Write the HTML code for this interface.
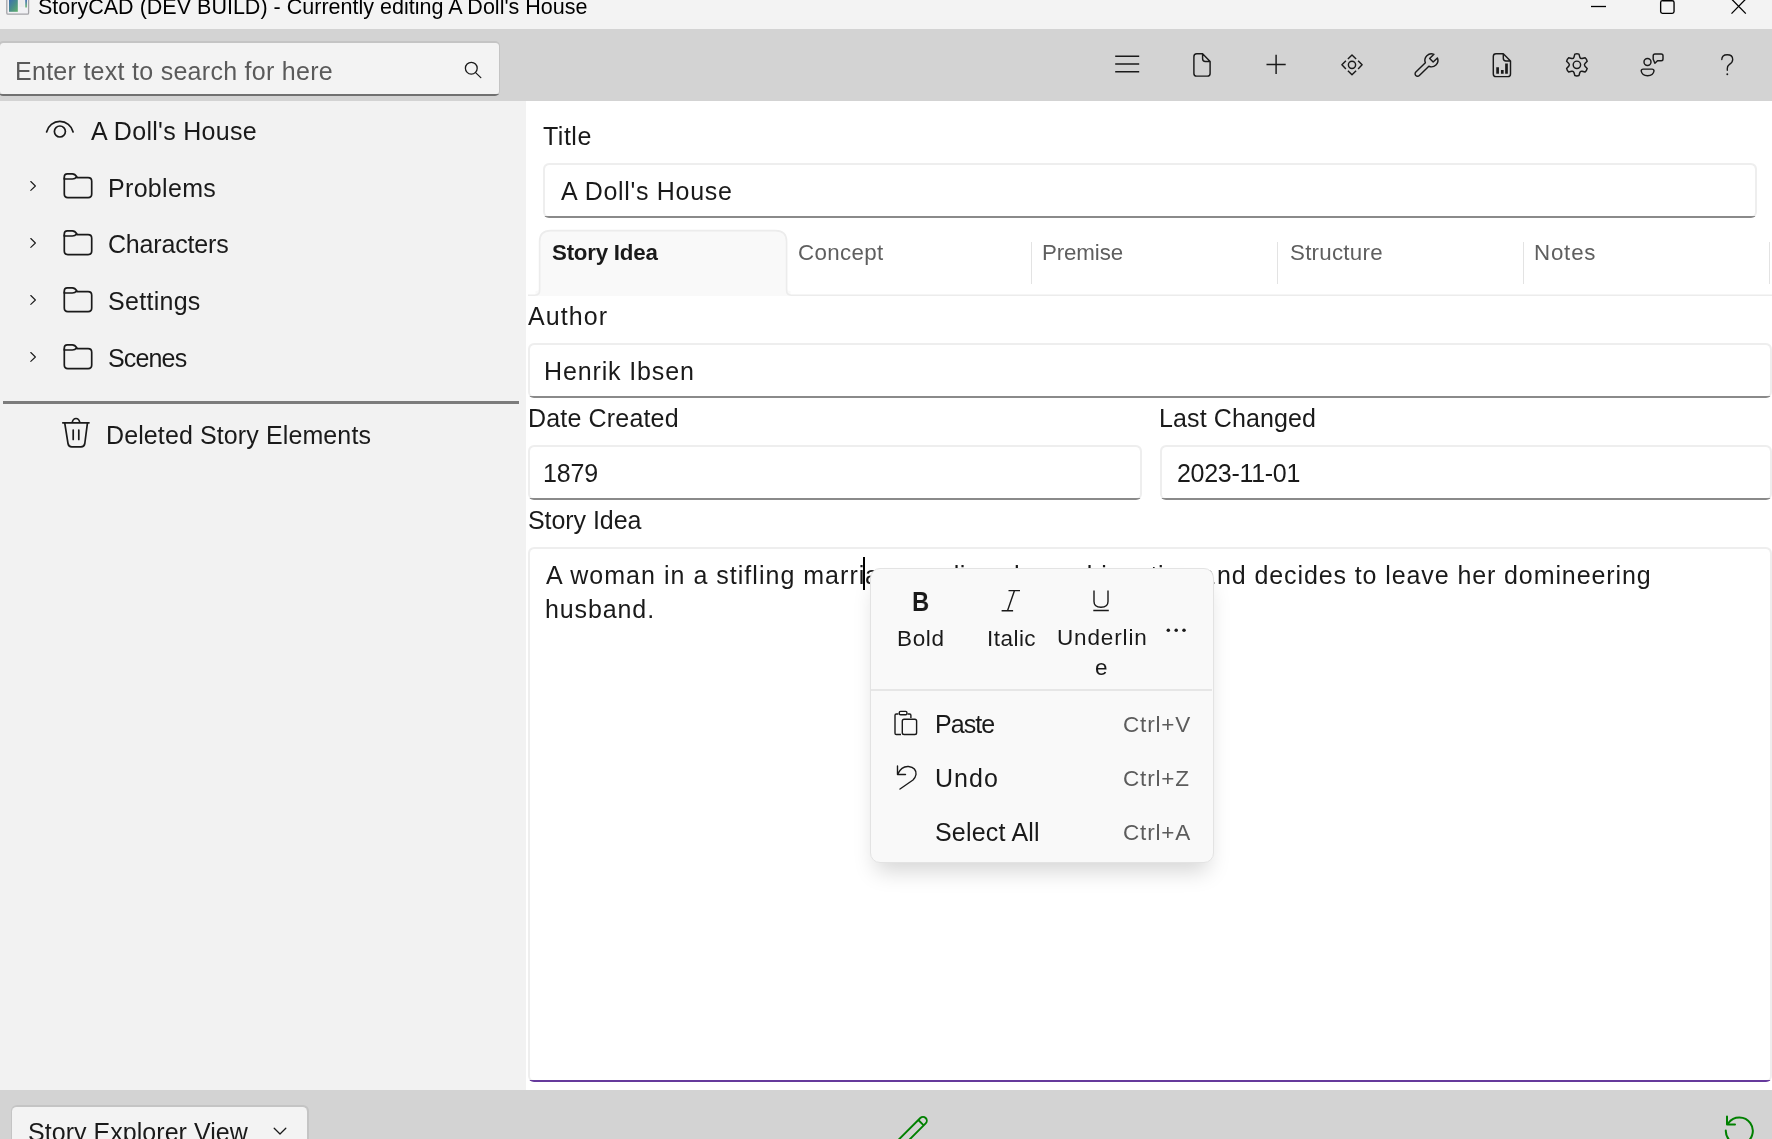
<!DOCTYPE html>
<html><head><meta charset="utf-8"><style>
html,body{margin:0;padding:0;width:1772px;height:1139px;overflow:hidden;background:#f3f3f3}
body{position:relative;font-family:"Liberation Sans",sans-serif}
.t{position:absolute;will-change:transform;white-space:pre;line-height:1;font-family:"Liberation Sans",sans-serif}
</style></head><body>
<div style="position:absolute;left:0px;top:0px;width:1772px;height:29px;box-sizing:border-box;background:#f3f3f3"></div>
<div style="position:absolute;left:0px;top:29px;width:1772px;height:72px;box-sizing:border-box;background:#d3d3d3"></div>
<div style="position:absolute;left:0px;top:101px;width:526px;height:989px;box-sizing:border-box;background:#f2f2f2"></div>
<div style="position:absolute;left:526px;top:101px;width:1246px;height:989px;box-sizing:border-box;background:#ffffff"></div>
<div style="position:absolute;left:0px;top:1090px;width:1772px;height:49px;box-sizing:border-box;background:#d3d3d3"></div>
<svg style="position:absolute;left:0;top:0" width="36" height="20" viewBox="0 0 36 20"><defs><linearGradient id="g1" x1="0" y1="0" x2="1" y2="1"><stop offset="0" stop-color="#3d6fb0"/><stop offset="0.5" stop-color="#4a8e8a"/><stop offset="1" stop-color="#62b06a"/></linearGradient><linearGradient id="g2" x1="0" y1="0" x2="0" y2="1"><stop offset="0" stop-color="#4a74b8"/><stop offset="1" stop-color="#78c07a"/></linearGradient></defs><rect x="6.8" y="-3" width="21.8" height="17.2" rx="1.2" fill="#f1f1f4" stroke="#a4a4a8" stroke-width="1.3"/><rect x="9" y="0" width="8.8" height="11.8" fill="url(#g1)"/><rect x="19.2" y="0" width="5" height="7" fill="#ececec"/><rect x="25.2" y="0" width="1.8" height="7.5" fill="url(#g2)"/></svg>
<div class="t" style="left:37.5px;top:-3.2px;font-size:21.50px;letter-spacing:0.01px;font-weight:400;color:#000;">StoryCAD (DEV BUILD) - Currently editing A Doll's House</div>
<svg style="position:absolute;left:1585px;top:0" width="170" height="20" viewBox="1585 0 170 20"><line x1="1591" y1="6.5" x2="1606" y2="6.5" stroke="#000" stroke-width="1.3"/><rect x="1660.65" y="0.7" width="13.4" height="12.6" rx="1.8" fill="none" stroke="#000" stroke-width="1.35"/><path d="M1731.5 -1 L1745.8 13.6 M1745.8 -1 L1731.5 13.6" stroke="#000" stroke-width="1.3"/></svg>
<div style="position:absolute;left:-2px;top:41.4px;width:502px;height:54.6px;border-radius:5px;background:linear-gradient(to bottom,#c4c4c4 calc(100% - 2px),#707070 calc(100% - 2px));overflow:hidden"><div style="position:absolute;left:1.5px;top:1.5px;right:1.5px;bottom:2px;background:#f3f3f3;border-radius:3.5px 3.5px 3px 3px"></div></div>
<div class="t" style="left:15.3px;top:58.7px;font-size:25.00px;letter-spacing:0.28px;font-weight:400;color:#5a5a5a;">Enter text to search for here</div>
<svg style="position:absolute;left:460px;top:56px" width="26" height="26" viewBox="460 56 26 26"><circle cx="471.3" cy="68.2" r="5.9" fill="none" stroke="#1a1a1a" stroke-width="1.3"/><line x1="475.6" y1="72.6" x2="480.8" y2="77.6" stroke="#1a1a1a" stroke-width="1.3" stroke-linecap="round"/></svg>
<svg style="position:absolute;left:0;top:0" width="1772" height="101" viewBox="0 0 1772 101"><path d="M1115.2 56.3H1139.2M1115.2 64H1139.2M1115.2 71.7H1139.2" fill="none" stroke="#1a1a1a" stroke-width="1.45" stroke-linecap="butt" stroke-linejoin="round"/><path d="M1196.8 53.8H1202.6L1210.1 61.5V73.4Q1210.1 76.1 1207.4 76.1H1196.6Q1193.9 76.1 1193.9 73.4V56.7Q1193.9 53.8 1196.8 53.8Z M1202.6 53.8V58.8Q1202.6 61.5 1205.3 61.5H1210.1" fill="none" stroke="#1a1a1a" stroke-width="1.45" stroke-linecap="round" stroke-linejoin="round"/><path d="M1276.1 54.8V74M1266.5 64.4H1285.7" fill="none" stroke="#1a1a1a" stroke-width="1.45" stroke-linecap="butt" stroke-linejoin="round"/><path d="M1347.9 58.9L1352 54.9L1356.1 58.9M1347.9 70.8L1352 74.8L1356.1 70.8M1345.9 60.75L1341.9 64.85L1345.9 68.95M1358.1 60.75L1362.1 64.85L1358.1 68.95" fill="none" stroke="#1a1a1a" stroke-width="1.45" stroke-linecap="butt" stroke-linejoin="round"/><circle cx="1352" cy="64.85" r="3.6" fill="none" stroke="#1a1a1a" stroke-width="1.45" stroke-linecap="round" stroke-linejoin="round"/><path d="M1433.94 54.32A6.5 6.5 0 0 0 1425.36 62.7L1415.85 72.01A2.5 2.5 0 0 0 1419.35 75.59L1428.86 66.28A6.5 6.5 0 0 0 1437.44 57.9L1433.15 62.09L1429.65 58.51Z" fill="none" stroke="#1a1a1a" stroke-width="1.45" stroke-linecap="round" stroke-linejoin="round"/><path d="M1496 53.8H1503.3L1510.5 61V73.9Q1510.5 76.6 1507.8 76.6H1496Q1493.3 76.6 1493.3 73.9V56.5Q1493.3 53.8 1496 53.8Z M1503.3 53.8V58.3Q1503.3 61 1506 61H1510.5" fill="none" stroke="#1a1a1a" stroke-width="1.45" stroke-linecap="round" stroke-linejoin="round"/><path d="M1497.6 67.3V73.8M1502.3 70V73.8M1506.5 63.5V73.8" fill="none" stroke="#1a1a1a" stroke-width="2.7" stroke-linecap="butt"/><path d="M1574.82 54.15 Q1576.90 53.45 1578.98 54.15 L1579.84 57.19 Q1580.35 58.87 1582.06 58.48 L1585.13 57.70 Q1586.77 59.15 1587.21 61.30 L1585.00 63.57 Q1583.80 64.85 1585.00 66.13 L1587.21 68.40 Q1586.77 70.55 1585.13 72.00 L1582.06 71.22 Q1580.35 70.83 1579.84 72.51 L1578.98 75.55 Q1576.90 76.25 1574.82 75.55 L1573.96 72.51 Q1573.45 70.83 1571.74 71.22 L1568.67 72.00 Q1567.03 70.55 1566.59 68.40 L1568.80 66.13 Q1570.00 64.85 1568.80 63.57 L1566.59 61.30 Q1567.03 59.15 1568.67 57.70 L1571.74 58.48 Q1573.45 58.87 1573.96 57.19 L1574.82 54.15 Z" fill="none" stroke="#1a1a1a" stroke-width="1.45" stroke-linecap="round" stroke-linejoin="round"/><circle cx="1576.9" cy="64.85" r="3.7" fill="none" stroke="#1a1a1a" stroke-width="1.45" stroke-linecap="round" stroke-linejoin="round"/><circle cx="1647.5" cy="61.9" r="3.5" fill="none" stroke="#1a1a1a" stroke-width="1.45" stroke-linecap="round" stroke-linejoin="round"/><path d="M1643.2 69.1H1652Q1654 69.1 1654 71Q1653.2 75.7 1647.6 75.7Q1642 75.7 1641.2 71Q1641.2 69.1 1643.2 69.1Z" fill="none" stroke="#1a1a1a" stroke-width="1.45" stroke-linecap="round" stroke-linejoin="round"/><path d="M1655 54H1661.2Q1663 54 1663 55.8V58.9Q1663 60.7 1661.2 60.7H1657.5L1654.9 63.3L1653.2 59.3V55.8Q1653.2 54 1655 54Z" fill="none" stroke="#1a1a1a" stroke-width="1.45" stroke-linecap="round" stroke-linejoin="round"/><path d="M1721.8 59.6Q1721.8 54.7 1727.2 54.7Q1732.7 54.7 1732.7 59.4Q1732.7 62.3 1729.5 64.4Q1727.3 65.9 1727.3 68.6V70.2" fill="none" stroke="#1a1a1a" stroke-width="1.35" stroke-linecap="round"/><circle cx="1727.3" cy="74.3" r="0.95" fill="#1a1a1a"/></svg>
<svg style="position:absolute;left:0;top:101px" width="526" height="400" viewBox="0 101 526 400"><path d="M46.6 132 A13.6 13.6 0 0 1 73.1 132" fill="none" stroke="#1a1a1a" stroke-width="1.7" stroke-linecap="round" stroke-linejoin="round"/><circle cx="59.9" cy="131.5" r="5.5" fill="none" stroke="#1a1a1a" stroke-width="1.7" stroke-linecap="round" stroke-linejoin="round"/><path d="M30.8 181.5L35.4 186L30.8 190.4" fill="none" stroke="#1a1a1a" stroke-width="1.1" stroke-linecap="round" stroke-linejoin="round"/><path d="M64.3 178V194Q64.3 197.6 67.9 197.6H88.1Q91.7 197.6 91.7 194V181.2Q91.7 177.6 88.1 177.6H76.8" fill="none" stroke="#1a1a1a" stroke-width="1.7" stroke-linecap="round" stroke-linejoin="round"/><path d="M64.3 179V176.8Q64.3 173.8 67.3 173.8H72.3Q75 173.8 76.8 176.8Q75 179 72.3 179Z" fill="none" stroke="#1a1a1a" stroke-width="1.7" stroke-linecap="round" stroke-linejoin="round"/><path d="M30.8 238.5L35.4 243L30.8 247.4" fill="none" stroke="#1a1a1a" stroke-width="1.1" stroke-linecap="round" stroke-linejoin="round"/><path d="M64.3 235V251Q64.3 254.6 67.9 254.6H88.1Q91.7 254.6 91.7 251V238.2Q91.7 234.6 88.1 234.6H76.8" fill="none" stroke="#1a1a1a" stroke-width="1.7" stroke-linecap="round" stroke-linejoin="round"/><path d="M64.3 236V233.8Q64.3 230.8 67.3 230.8H72.3Q75 230.8 76.8 233.8Q75 236 72.3 236Z" fill="none" stroke="#1a1a1a" stroke-width="1.7" stroke-linecap="round" stroke-linejoin="round"/><path d="M30.8 295.5L35.4 300L30.8 304.4" fill="none" stroke="#1a1a1a" stroke-width="1.1" stroke-linecap="round" stroke-linejoin="round"/><path d="M64.3 292V308Q64.3 311.6 67.9 311.6H88.1Q91.7 311.6 91.7 308V295.2Q91.7 291.6 88.1 291.6H76.8" fill="none" stroke="#1a1a1a" stroke-width="1.7" stroke-linecap="round" stroke-linejoin="round"/><path d="M64.3 293V290.8Q64.3 287.8 67.3 287.8H72.3Q75 287.8 76.8 290.8Q75 293 72.3 293Z" fill="none" stroke="#1a1a1a" stroke-width="1.7" stroke-linecap="round" stroke-linejoin="round"/><path d="M30.8 352.5L35.4 357L30.8 361.4" fill="none" stroke="#1a1a1a" stroke-width="1.1" stroke-linecap="round" stroke-linejoin="round"/><path d="M64.3 349V365Q64.3 368.6 67.9 368.6H88.1Q91.7 368.6 91.7 365V352.2Q91.7 348.6 88.1 348.6H76.8" fill="none" stroke="#1a1a1a" stroke-width="1.7" stroke-linecap="round" stroke-linejoin="round"/><path d="M64.3 350V347.8Q64.3 344.8 67.3 344.8H72.3Q75 344.8 76.8 347.8Q75 350 72.3 350Z" fill="none" stroke="#1a1a1a" stroke-width="1.7" stroke-linecap="round" stroke-linejoin="round"/><path d="M62.8 422.8H89M64.8 423.3L68 443.5Q68.5 446.8 71.8 446.8H81Q84.3 446.8 84.8 443.5L87.4 423.3M73.2 430V439.5M78.8 430V439.5M72.2 422.5Q73 418.5 76 418.5Q79 418.5 79.8 422.5" fill="none" stroke="#1a1a1a" stroke-width="1.7" stroke-linecap="round" stroke-linejoin="round"/></svg>
<div class="t" style="left:91.0px;top:119.1px;font-size:25.00px;letter-spacing:0.30px;font-weight:400;color:#1a1a1a;">A Doll's House</div>
<div class="t" style="left:107.7px;top:175.8px;font-size:25.00px;letter-spacing:0.32px;font-weight:400;color:#1a1a1a;">Problems</div>
<div class="t" style="left:107.5px;top:232.4px;font-size:25.00px;letter-spacing:-0.18px;font-weight:400;color:#1a1a1a;">Characters</div>
<div class="t" style="left:107.5px;top:289.4px;font-size:25.00px;letter-spacing:0.29px;font-weight:400;color:#1a1a1a;">Settings</div>
<div class="t" style="left:107.5px;top:346.2px;font-size:25.00px;letter-spacing:-0.85px;font-weight:400;color:#1a1a1a;">Scenes</div>
<div style="position:absolute;left:3px;top:401px;width:516px;height:3px;box-sizing:border-box;background:#7c7c7c"></div>
<div class="t" style="left:106.2px;top:423.4px;font-size:25.00px;letter-spacing:0.11px;font-weight:400;color:#1a1a1a;">Deleted Story Elements</div>
<div class="t" style="left:543.0px;top:123.6px;font-size:25.00px;letter-spacing:0.51px;font-weight:400;color:#1a1a1a;">Title</div>
<div style="position:absolute;left:543px;top:163px;width:1214px;height:55px;border-radius:6px;background:linear-gradient(to bottom,#eeeeee calc(100% - 2px),#8a8a8a calc(100% - 2px));overflow:hidden"><div style="position:absolute;left:1.6px;top:1.6px;right:1.6px;bottom:2px;background:#fff;border-radius:4.5px 4.5px 4px 4px"></div></div>
<div class="t" style="left:560.6px;top:178.7px;font-size:25.00px;letter-spacing:0.70px;font-weight:400;color:#1a1a1a;">A Doll's House</div>
<svg style="position:absolute;left:526px;top:225px" width="1246" height="75" viewBox="526 225 1246 75"><path d="M535.5 296V291Q539.5 291 539.5 287V241.5Q539.5 230.5 550.5 230.5H775.5Q786.5 230.5 786.5 241.5V287Q786.5 291 790.5 291V296Z" fill="#f9f9f9"/><path d="M528 295.2H535Q539.6 295.2 539.6 290.6V241.5Q539.6 230.6 550.5 230.6H775.6Q786.6 230.6 786.6 241.5V290.6Q786.6 295.2 791.2 295.2H1772" fill="none" stroke="#ececec" stroke-width="1.6"/></svg>
<div style="position:absolute;left:1031px;top:242px;width:1px;height:42px;box-sizing:border-box;background:#e3e3e3"></div>
<div style="position:absolute;left:1277px;top:242px;width:1px;height:42px;box-sizing:border-box;background:#e3e3e3"></div>
<div style="position:absolute;left:1523px;top:242px;width:1px;height:42px;box-sizing:border-box;background:#e3e3e3"></div>
<div style="position:absolute;left:1769px;top:242px;width:1px;height:42px;box-sizing:border-box;background:#e3e3e3"></div>
<div class="t" style="left:552.2px;top:241.8px;font-size:22.30px;letter-spacing:-0.22px;font-weight:700;color:#1a1a1a;">Story Idea</div>
<div class="t" style="left:797.9px;top:241.8px;font-size:22.30px;letter-spacing:0.36px;font-weight:400;color:#5f5f5f;">Concept</div>
<div class="t" style="left:1042.4px;top:241.8px;font-size:22.30px;letter-spacing:-0.11px;font-weight:400;color:#5f5f5f;">Premise</div>
<div class="t" style="left:1289.7px;top:241.8px;font-size:22.30px;letter-spacing:0.26px;font-weight:400;color:#5f5f5f;">Structure</div>
<div class="t" style="left:1534.2px;top:241.8px;font-size:22.30px;letter-spacing:0.81px;font-weight:400;color:#5f5f5f;">Notes</div>
<div class="t" style="left:528.3px;top:303.8px;font-size:25.00px;letter-spacing:1.07px;font-weight:400;color:#1a1a1a;">Author</div>
<div style="position:absolute;left:528px;top:343px;width:1244px;height:55px;border-radius:6px;background:linear-gradient(to bottom,#eeeeee calc(100% - 2px),#8a8a8a calc(100% - 2px));overflow:hidden"><div style="position:absolute;left:1.6px;top:1.6px;right:1.6px;bottom:2px;background:#fff;border-radius:4.5px 4.5px 4px 4px"></div></div>
<div class="t" style="left:544.0px;top:358.8px;font-size:25.00px;letter-spacing:0.87px;font-weight:400;color:#1a1a1a;">Henrik Ibsen</div>
<div class="t" style="left:527.5px;top:405.9px;font-size:25.00px;letter-spacing:0.17px;font-weight:400;color:#1a1a1a;">Date Created</div>
<div style="position:absolute;left:528px;top:445px;width:614px;height:55px;border-radius:6px;background:linear-gradient(to bottom,#eeeeee calc(100% - 2px),#8a8a8a calc(100% - 2px));overflow:hidden"><div style="position:absolute;left:1.6px;top:1.6px;right:1.6px;bottom:2px;background:#fff;border-radius:4.5px 4.5px 4px 4px"></div></div>
<div class="t" style="left:543.3px;top:460.6px;font-size:25.00px;letter-spacing:-0.13px;font-weight:400;color:#1a1a1a;">1879</div>
<div class="t" style="left:1158.8px;top:405.9px;font-size:25.00px;letter-spacing:0.11px;font-weight:400;color:#1a1a1a;">Last Changed</div>
<div style="position:absolute;left:1160px;top:445px;width:612px;height:55px;border-radius:6px;background:linear-gradient(to bottom,#eeeeee calc(100% - 2px),#8a8a8a calc(100% - 2px));overflow:hidden"><div style="position:absolute;left:1.6px;top:1.6px;right:1.6px;bottom:2px;background:#fff;border-radius:4.5px 4.5px 4px 4px"></div></div>
<div class="t" style="left:1177.0px;top:460.6px;font-size:25.00px;letter-spacing:-0.30px;font-weight:400;color:#1a1a1a;">2023-11-01</div>
<div class="t" style="left:527.5px;top:508.0px;font-size:25.00px;letter-spacing:-0.06px;font-weight:400;color:#1a1a1a;">Story Idea</div>
<div style="position:absolute;left:528px;top:547px;width:1244px;height:535px;border-radius:6px;background:linear-gradient(to bottom,#eeeeee calc(100% - 2px),#663a9c calc(100% - 2px));overflow:hidden"><div style="position:absolute;left:1.6px;top:1.6px;right:1.6px;bottom:2px;background:#fff;border-radius:4.5px 4.5px 4px 4px"></div></div>
<div class="t" style="left:545.8px;top:562.5px;font-size:25.00px;letter-spacing:1.02px;font-weight:400;color:#1a1a1a;">A woman in a stifling marri</div>
<div class="t" style="left:865.0px;top:562.5px;font-size:25.00px;letter-spacing:0.55px;font-weight:400;color:#1a1a1a;">age realizes her subjugation a</div>
<div class="t" style="left:1216.8px;top:562.5px;font-size:25.00px;letter-spacing:0.90px;font-weight:400;color:#1a1a1a;">nd decides to leave her domineering</div>
<div class="t" style="left:544.5px;top:597.2px;font-size:25.00px;letter-spacing:0.89px;font-weight:400;color:#1a1a1a;">husband.</div>
<div style="position:absolute;left:862.8px;top:557px;width:2.0px;height:33px;box-sizing:border-box;background:#000"></div>
<div style="position:absolute;left:869.5px;top:568px;width:344px;height:294.5px;box-sizing:border-box;background:#f9f9f9;border:1.5px solid #e3e3e3;border-radius:10px;box-shadow:0 14px 22px -6px rgba(0,0,0,0.17)"></div>
<div style="position:absolute;left:871px;top:689px;width:341px;height:2px;box-sizing:border-box;background:#e6e6e6"></div>
<div class="t" style="left:911.5px;top:589.3px;font-size:28.5px;line-height:24px;font-weight:700;color:#1a1a1a;transform:scaleX(0.83);transform-origin:0 0">B</div>
<svg style="position:absolute;left:870px;top:568px" width="343" height="294" viewBox="870 568 343 294"><path d="M1008.5 590.6H1020M1001.6 610.8H1013.1M1014.5 590.6L1007.5 610.8" fill="none" stroke="#1a1a1a" stroke-width="1.4"/><path d="M1094 590.5V601.5Q1094 607.3 1101 607.3Q1108 607.3 1108 601.5V590.5M1093.3 610.5H1108.8" fill="none" stroke="#1a1a1a" stroke-width="1.4"/><circle cx="1168.3" cy="630.2" r="1.75" fill="#1a1a1a"/><circle cx="1176.2" cy="630.2" r="1.75" fill="#1a1a1a"/><circle cx="1184" cy="630.2" r="1.75" fill="#1a1a1a"/><path d="M898.5 714H896.3Q895 714 895 715.3V733.2Q895 734.5 896.3 734.5H901M907.5 714H909.6Q910.9 714 910.9 715.3V718" fill="none" stroke="#1a1a1a" stroke-width="1.4"/><rect x="899.3" y="711.4" width="7.6" height="3.4" rx="1.2" fill="none" stroke="#1a1a1a" stroke-width="1.4"/><rect x="902.3" y="719.3" width="14.3" height="15.2" rx="1.8" fill="none" stroke="#1a1a1a" stroke-width="1.4"/><path d="M897.5 766V774.5H905.5M897.8 774Q901.5 766 908.5 766.5Q916.5 767.5 916 774.5Q915.5 777.5 913 780L900 789" fill="none" stroke="#1a1a1a" stroke-width="1.4" stroke-linecap="round" stroke-linejoin="round"/></svg>
<div class="t" style="left:896.9px;top:627.6px;font-size:22.50px;letter-spacing:0.62px;font-weight:400;color:#1a1a1a;">Bold</div>
<div class="t" style="left:986.5px;top:627.6px;font-size:22.50px;letter-spacing:0.47px;font-weight:400;color:#1a1a1a;">Italic</div>
<div class="t" style="left:1056.5px;top:626.8px;font-size:22.50px;letter-spacing:0.85px;font-weight:400;color:#1a1a1a;">Underlin</div>
<div class="t" style="left:1095.4px;top:656.5px;font-size:22.50px;letter-spacing:0.00px;font-weight:400;color:#1a1a1a;">e</div>
<div class="t" style="left:935.3px;top:711.8px;font-size:25.00px;letter-spacing:-0.94px;font-weight:400;color:#1a1a1a;">Paste</div>
<div class="t" style="left:935.3px;top:765.5px;font-size:25.00px;letter-spacing:1.02px;font-weight:400;color:#1a1a1a;">Undo</div>
<div class="t" style="left:934.6px;top:819.8px;font-size:25.00px;letter-spacing:0.19px;font-weight:400;color:#1a1a1a;">Select All</div>
<div class="t" style="left:1122.6px;top:713.8px;font-size:22.50px;letter-spacing:0.82px;font-weight:400;color:#5c5c5c;">Ctrl+V</div>
<div class="t" style="left:1122.6px;top:767.8px;font-size:22.50px;letter-spacing:0.84px;font-weight:400;color:#5c5c5c;">Ctrl+Z</div>
<div class="t" style="left:1122.6px;top:821.5px;font-size:22.50px;letter-spacing:0.82px;font-weight:400;color:#5c5c5c;">Ctrl+A</div>
<div style="position:absolute;left:10.5px;top:1105.3px;width:298.0px;height:64.70000000000005px;border-radius:6px;background:linear-gradient(to bottom,#c4c4c4 calc(100% - 1.5px),#b8b8b8 calc(100% - 1.5px));overflow:hidden"><div style="position:absolute;left:1.5px;top:1.5px;right:1.5px;bottom:1.5px;background:#f3f3f3;border-radius:4.5px 4.5px 4px 4px"></div></div>
<div class="t" style="left:27.6px;top:1120.3px;font-size:25.00px;letter-spacing:0.04px;font-weight:400;color:#1a1a1a;">Story Explorer View</div>
<svg style="position:absolute;left:0;top:1090px" width="1772" height="49" viewBox="0 1090 1772 49"><path d="M274.2 1128.3L280 1134L285.8 1128.3" fill="none" stroke="#1a1a1a" stroke-width="1.3" stroke-linecap="round" stroke-linejoin="round"/><g transform="translate(923 1120.7) rotate(45)"><path d="M-3.8 0A3.8 3.8 0 0 1 3.8 0V34L0 40L-3.8 34Z M-3.8 2.8H3.8" fill="none" stroke="#008000" stroke-width="1.9" stroke-linejoin="round"/></g><path d="M1727 1116.6V1124.6H1735 M1725.8 1130.5A13.5 13.5 0 1 0 1728.4 1123" fill="none" stroke="#008000" stroke-width="2" stroke-linecap="round" stroke-linejoin="round"/></svg>
</body></html>
